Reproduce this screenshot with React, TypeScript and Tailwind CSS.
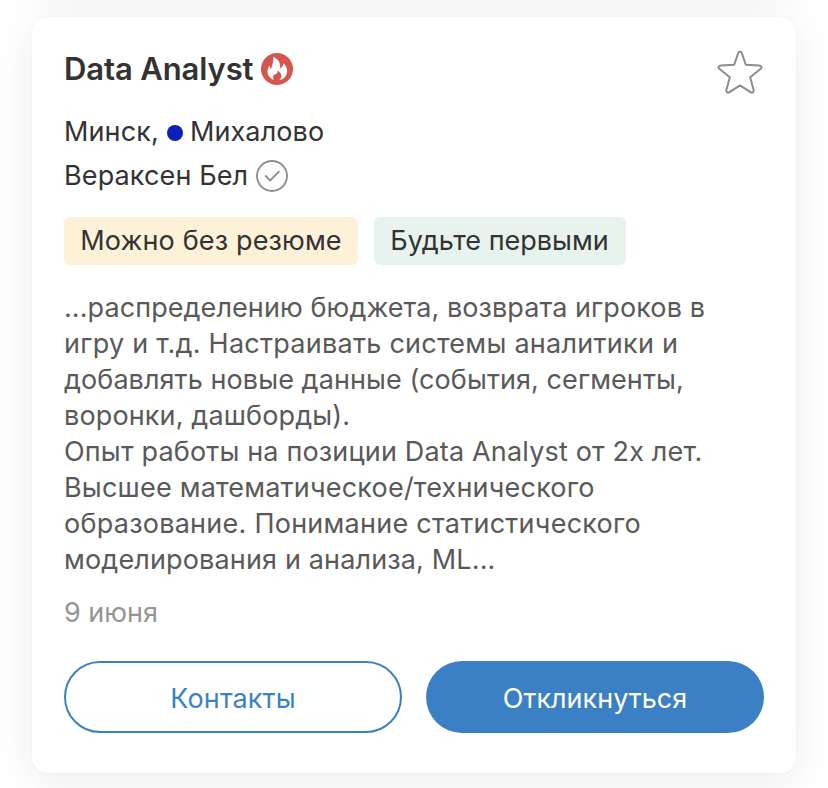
const lines: { text: string; tracking: string }[] = [
  { text: '...распределению бюджета, возврата игроков в', tracking: 'tracking-[0.08px]' },
  { text: 'игру и т.д. Настраивать системы аналитики и', tracking: 'tracking-[0.26px]' },
  { text: 'добавлять новые данные (события, сегменты,', tracking: 'tracking-[0.08px]' },
  { text: 'воронки, дашборды).', tracking: 'tracking-[0.14px]' },
  { text: 'Опыт работы на позиции Data Analyst от 2х лет.', tracking: 'tracking-[0.17px]' },
  { text: 'Высшее математическое/технического', tracking: 'tracking-[0.2px]' },
  { text: 'образование. Понимание статистического', tracking: 'tracking-[0.25px]' },
  { text: 'моделирования и анализа, ML...', tracking: 'tracking-[0.15px]' },
];

function FlameBadge() {
  return (
    <svg className="h-8 w-8 shrink-0" viewBox="0 0 32 32">
      <circle cx="16" cy="16" r="16" fill="#d5564f" />
      <path
        d="M12 3.8C16.5 5.3 20 10 19.2 15.4C21.3 14.4 22.4 12.4 22.4 10.3C25 12.6 26.2 15.6 26.1 18.4C25.9 22.8 22.8 26.3 18.5 27.1H13.2C9.4 25.6 6.6 22.6 6.5 18.8C6.4 16.2 7.4 14.2 8.5 12.8C8.7 14.5 9.3 15.6 10.4 16.2C10 13.2 13.5 9.2 12 3.8Z"
        fill="#fff"
      />
      <path
        d="M16.5 17.4C19.3 18.8 20.6 21 20.2 23.5C19.9 25.3 19.1 26.5 17.9 27.4H13.4C12.1 26.2 11.7 24.4 12.3 22.9C12.8 21.8 14.2 21.4 15.3 20.8C16.4 20.2 16.9 19 16.5 17.4Z"
        fill="#d5564f"
      />
    </svg>
  );
}

function FavoriteStar() {
  return (
    <svg className="mt-px h-11 w-12 shrink-0" viewBox="0 0 48 44" fill="none" stroke="#8c8c8c" strokeWidth="2" strokeLinejoin="round">
      <path d="M22.3 2.8Q24 0 25.7 2.8L29.8 14.8L43.2 15.4Q47.2 16.2 44.4 19L34.2 27.2L37.7 40.2Q37.6 43.4 34.8 42.3L24 35.4L13.2 42.3Q10.4 43.4 10.3 40.2L13.8 27.2L3.6 19Q.8 16.2 4.8 15.4L18.2 14.8Z" />
    </svg>
  );
}

const card = 'w-[764px] shrink-0 rounded-[16px] bg-white shadow-[0_8px_40px_rgba(0,0,0,0.08),0_0_2px_rgba(0,0,0,0.06)]';

export default function App() {
  return (
    <div className="flex h-[788px] w-[828px] flex-col gap-8 overflow-hidden bg-white px-8 font-['Inter','Liberation_Sans',sans-serif] text-[27px] text-[#333]">
      <div className={`${card} -mt-[415px] h-[400px]`} />
      <main className={`${card} flex h-[756px] flex-col px-8 pt-8`}>
        <header className="flex h-11 items-start justify-between">
          <div className="flex items-center gap-2">
            <h1 className="text-[31px] leading-[40px] font-semibold tracking-[-0.12px] whitespace-nowrap">Data Analyst</h1>
            <FlameBadge />
          </div>
          <FavoriteStar />
        </header>

        <p className="mt-[17px] flex items-center leading-[44px] tracking-[0.12px] whitespace-nowrap">
          Минск,
          <span className="mt-px mr-[7px] ml-2 h-4 w-4 rounded-full bg-[#0d1fb7]" />
          Михалово
        </p>
        <p className="flex items-center gap-2 leading-[44px] tracking-[0.12px] whitespace-nowrap">
          Вераксен Бел
          <svg className="mb-px h-8 w-8" viewBox="0 0 32 32" fill="none" stroke="#8c8c8c" strokeWidth="1.8">
            <circle cx="16" cy="16" r="15" />
            <path d="M9.2 15.5L14.2 20.5L23.4 11.2" />
          </svg>
        </p>

        <div className="mt-[19px] flex gap-4 leading-[48px] whitespace-nowrap">
          <span className="h-12 w-[294px] rounded-md bg-[#fdf1d8] text-center tracking-[0.15px]">Можно без резюме</span>
          <span className="h-12 w-[252px] rounded-md bg-[#e8f3ee] pr-px text-center">Будьте первыми</span>
        </div>

        <div className="mt-[25px] leading-[36px] whitespace-nowrap text-[#595959]">
          {lines.map((line) => (
            <p key={line.text} className={line.tracking}>{line.text}</p>
          ))}
        </div>

        <time className="mt-[17px] leading-[36px] text-[#949494]">9 июня</time>

        <div className="mt-[30px] grid grid-cols-2 gap-6">
          <button className="h-[72px] rounded-full border-2 border-[#3b82bd] pt-1 tracking-[0.1px] text-[#3b82c4]">Контакты</button>
          <button className="h-[72px] rounded-full bg-[#3b80c4] pt-1 text-white">Откликнуться</button>
        </div>
      </main>
      <div className={`${card} h-[400px]`} />
    </div>
  );
}
